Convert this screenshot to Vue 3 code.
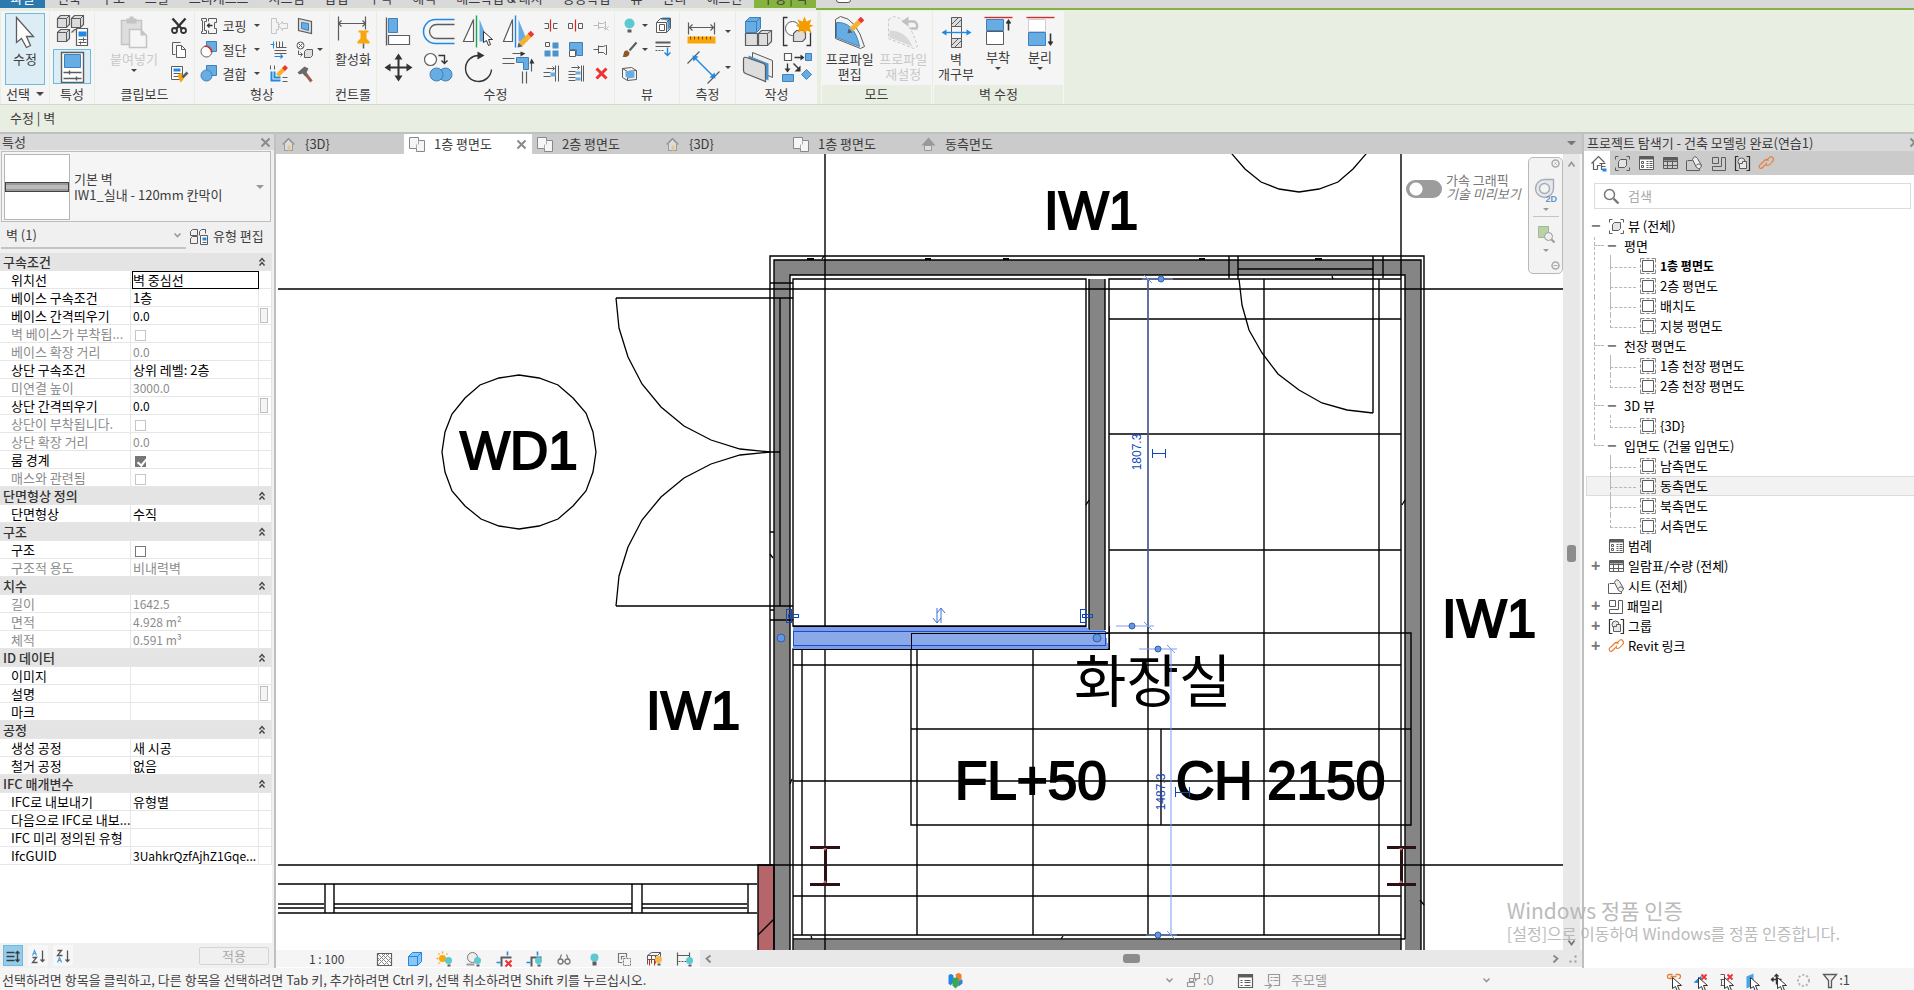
<template>
  <div class="app">
    <nav class="menu">
      <button class="menu-file">파일</button>
      <button v-for="m in menus" :key="m">{{ m }}</button>
      <button class="menu-active">수정 | 벽</button>
      <span class="menu-toggle"></span>
    </nav>

    <div class="ribbon">
      <section class="panel w-select">
        <div class="body">
          <button class="big on tall"><Icon name="cursor" /><span>수정</span></button>
        </div>
        <h2>선택 <i class="tri wide"></i></h2>
      </section>

      <section class="panel w-props">
        <div class="body stack">
          <button class="sq" aria-label="유형 특성"><Icon name="typeProps" /></button>
          <button class="sq on" aria-label="특성"><Icon name="props" /></button>
        </div>
        <h2>특성</h2>
      </section>

      <section class="panel w-clip">
        <div class="body">
          <button class="big off paste" disabled><Icon name="paste" /><span>붙여넣기</span><i class="tri"></i></button>
          <div class="col">
            <button v-for="n in ['cut', 'copy', 'match']" :key="n" :aria-label="n"><Icon :name="n" /></button>
          </div>
        </div>
        <h2>클립보드</h2>
      </section>

      <section class="panel w-geom">
        <div class="body">
          <div class="col geom">
            <button v-for="g in geometry" :key="g.label"><Icon :name="g.icon" /><span>{{ g.label }}</span><i class="tri"></i></button>
          </div>
          <div class="col">
            <button v-for="n in ['copeOff', 'beamJoin', 'wallJoin']" :key="n" :aria-label="n"><Icon :name="n" /></button>
          </div>
          <div class="col">
            <button v-for="n in ['face', 'paint', 'hammer']" :key="n" :aria-label="n"><Icon :name="n" /></button>
          </div>
          <i class="tri mid"></i>
        </div>
        <h2>형상</h2>
      </section>

      <section class="panel w-ctrl">
        <div class="body">
          <button class="big"><Icon name="activate" /><span>활성화</span></button>
        </div>
        <h2>컨트롤</h2>
      </section>

      <section class="panel w-modify">
        <div class="body">
          <div class="grid-big">
            <button v-for="n in modifyBig" :key="n" :aria-label="n"><Icon :name="n" /></button>
          </div>
          <div class="grid-small">
            <button v-for="n in modifySmall" :key="n" :aria-label="n"><Icon :name="n" /></button>
          </div>
        </div>
        <h2>수정</h2>
      </section>

      <section class="panel w-view">
        <div class="body">
          <div class="col view-col">
            <button aria-label="숨기기"><Icon name="bulb" /><i class="tri"></i></button>
            <button aria-label="재지정"><Icon name="brush" /><i class="tri"></i></button>
            <button aria-label="선택 상자"><Icon name="selBox" /></button>
          </div>
          <div class="col">
            <button aria-label="변위"><Icon name="cubeBox" /></button>
            <button aria-label="선 작업"><Icon name="linework" /></button>
          </div>
        </div>
        <h2>뷰</h2>
      </section>

      <section class="panel w-measure">
        <div class="body pair">
          <button aria-label="측정"><Icon name="ruler" /><i class="tri"></i></button>
          <button aria-label="치수"><Icon name="dimension" /><i class="tri"></i></button>
        </div>
        <h2>측정</h2>
      </section>

      <section class="panel w-create">
        <div class="body create">
          <button v-for="n in ['assembly', 'group', 'parts', 'similar']" :key="n" :aria-label="n"><Icon :name="n" /></button>
        </div>
        <h2>작성</h2>
      </section>

      <section class="panel green w-mode">
        <div class="body mode-body">
          <button class="big"><Icon name="profile" /><span>프로파일<br>편집</span></button>
          <button class="big off" disabled><Icon name="profileReset" /><span>프로파일<br>재설정</span></button>
        </div>
        <h2>모드</h2>
      </section>

      <section class="panel green w-wall">
        <div class="body wall-body">
          <button class="big"><Icon name="opening" /><span>벽<br>개구부</span></button>
          <button class="big"><Icon name="attach" /><span>부착</span><i class="tri"></i></button>
          <button class="big"><Icon name="detach" /><span>분리</span><i class="tri"></i></button>
        </div>
        <h2>벽 수정</h2>
      </section>
    </div>

    <div class="options">수정 | 벽</div>

    <main class="main">
      <aside class="props">
        <header>특성<button aria-label="닫기"><Icon name="close" /></button></header>
        <button class="type">
          <span class="thumb"><i></i></span>
          <span>기본 벽<br>IW1_실내 - 120mm 칸막이</span>
          <i class="tri wide"></i>
        </button>
        <div class="filter">
          <label class="filter-select">
            <select aria-label="카테고리"><option>벽 (1)</option></select>
            <Icon name="chevron" />
          </label>
          <button><Icon name="editType" />유형 편집</button>
        </div>
        <div class="sheet">
          <table>
            <colgroup><col class="c1"><col><col class="c3"></colgroup>
            <tbody v-for="g in groups" :key="g.name">
              <tr class="group"><th colspan="3"><div>{{ g.name }}<Icon name="fold" /></div></th></tr>
              <tr v-for="r in g.rows" :key="r[0]" :class="{ dim: r[2]?.includes('d') }">
                <th scope="row">{{ r[0] }}</th>
                <td>
                  <input v-if="typeof r[1] === 'boolean'" type="checkbox" :checked="r[1]" :aria-label="r[0]" :disabled="r[2]?.includes('d')">
                  <input v-else type="text" :value="r[1]" :aria-label="r[0]" :disabled="r[2]?.includes('d')" :class="{ focus: r[2]?.includes('f'), latin: !/[가-힣]/.test(r[1]) }">
                </td>
                <td><button v-if="r[2]?.includes('b')" class="assoc" aria-label="매개변수 연관"></button></td>
              </tr>
            </tbody>
          </table>
        </div>
        <footer>
          <button class="sort on" aria-label="범주별"><Icon name="sortCat" /></button>
          <button class="sort" aria-label="오름차순"><Icon name="sortAz" /></button>
          <button class="sort" aria-label="내림차순"><Icon name="sortZa" /></button>
          <button class="apply" disabled>적용</button>
        </footer>
      </aside>

      <section class="doc">
        <div class="tabs">
          <button v-for="(t, i) in tabs" :key="i" :class="{ active: t.active }">
            <Icon :name="t.icon" /><span>{{ t.name }}</span><Icon v-if="t.active" name="close" class="x" />
          </button>
          <i class="tab-list"></i>
        </div>

        <div class="work">
          <div class="canvas">
            <svg class="plan" viewBox="276 154 1287 796" preserveAspectRatio="xMinYMin slice">
              <g fill="#858585">
                <path d="M774 260H1421V950H1405V275H790V950H774Z" />
                <path d="M1089 279H1105V631H1089Z" />
                <path d="M793 940H1401V950H793Z" />
              </g>
              <path d="M758 865H774V950H758Z" fill="#b5666b" />
              <g class="ln">
                <path d="M825 154V950M1401 154V950M278 289H1563M278 865H1563" />
                <path d="M770 865V256H1424V950M774 950V260H1421V950M790 950V275H1405V939M793 626V279H1086V626Z" />
                <path d="M1089 630V279M1105 630V279M1109 649V279H1401M793 950V649H1109M793 935H1401M793 939H1405" />
                <path d="M802 649V935M917 649V935M1033 649V935M1148 279V935M1264 279V935M1379 279V935" />
                <path d="M1109 319H1401M1109 434H1401M1109 550H1401M793 665H1401M793 781H1401M793 896H1401" />
                <path d="M911 633H1411V825H911ZM911 729H1411M1161 729V825" />
                <path d="M616 298H793M616 606H793M780 298V606M770 452H780M770 283H793M770 620H793M770 610H774M770 532H774" />
                <path d="M1229 256V278M1238 256V279M1373 256V413M1383 256V278M1238 269H1373" />
                <path d="M278 884H757M278 904H324M334 904H632M642 904H747M278 908H324M334 908H632M642 908H747M278 913H757" />
                <path d="M325 884V913M334 884V913M632 884V913M642 884V913M748 884V913M758 950V865H774V950" />
                <path d="M807 259H814M925 259H931M1003 259H1009M1199 259H1205M1315 259H1322" stroke-width="2" />
              </g>
              <g class="curve">
                <path :d="arc(519, 452, 77, 0, 360, 24)" />
                <path :d="arc(1299, 115, 77, 0, 360, 24)" />
                <path :d="arc(770, 298, 154, 180, 90, 8)" />
                <path :d="arc(770, 606, 154, 180, 270, 8)" />
                <path :d="arc(1373, 279, 134, 180, 90, 8)" />
                <path d="M758 935L774 919M822 259L824 256M1086 505L1089 500M770 554L773 558M1402 505L1405 500M1332 276L1333 279M811 936L812 939M1061 939L1063 936M790 784L792 779M1420 900L1424 905" />
              </g>
              <g class="beam">
                <path d="M810 847H840M810 884H840M825 847V884M1387 847H1416M1387 884H1416M1401 847V884" />
              </g>
              <path d="M823 848h4l-2 3zM823 883h4l-2 -3zM1399 848h4l-2 3zM1399 883h4l-2 -3z" fill="#c0686c" />
              <g class="tag">
                <text x="1044" y="229">IW1</text>
                <text x="1442" y="637">IW1</text>
                <text x="646" y="729">IW1</text>
                <text x="460" y="469">WD1</text>
                <text x="955" y="799">FL+50</text>
                <text x="1176" y="799">CH 2150</text>
                <text x="1074" y="702" class="room">화장실</text>
              </g>
              <g class="sel">
                <path d="M793 627H1086L1089 630H1105L1108 645V649H793Z" fill="#7b9bec" />
                <path d="M793 631H1105V645H793Z" fill="#8ba8e8" stroke="#1a4fc4" />
                <path d="M911 649V633H1109M793 626H1086M793 649H1109V626" stroke="#000" fill="none" />
              </g>
              <g class="dim-line">
                <path d="M1148 279V626M1142 279H1173M1116 626H1154M1139 649H1177M1171 649V935M1146 935H1177" />
                <path d="M1144 275L1152 283M1144 622L1152 630M1167 645L1175 653M1167 931L1175 939" />
              </g>
              <g class="grip">
                <circle cx="1161" cy="279" r="3" /><circle cx="1132" cy="626" r="3" />
                <circle cx="1158" cy="649" r="3" /><circle cx="1158" cy="935" r="3" />
                <circle cx="781" cy="638" r="4" /><circle cx="1097" cy="638" r="4" />
              </g>
              <g class="flip">
                <path d="M786 609H791V622H786ZM788 614H798V617H788ZM1080 609H1085V622H1080ZM1082 614H1092V617H1082Z" />
                <path d="M1152 449V458M1165 449V458M1153 453H1165M1175 787V797M1189 787V797M1175 792H1189" />
                <path d="M937 608V622M941 609V623M933 618L937 623L941 618M937 613L941 608L945 613" class="flip-arrows" />
              </g>
              <g class="dim-text">
                <text transform="translate(1141 452) rotate(-90)">1807.3</text>
                <text transform="translate(1165 792) rotate(-90)">1487.3</text>
              </g>
            </svg>

            <label class="accel">
              <input type="checkbox" role="switch">
              <span>가속 그래픽<br><em>기술 미리보기</em></span>
            </label>
            <div class="navbar">
              <Icon name="navClose" class="end" />
              <button aria-label="탐색 휠"><Icon name="wheel" /></button>
              <i class="tri"></i>
              <hr>
              <button aria-label="영역 줌"><Icon name="zoomArea" /></button>
              <i class="tri"></i>
              <Icon name="navMin" class="end last" />
            </div>
          </div>
          <div class="vscroll">
            <button aria-label="위로"><Icon name="up" /></button>
            <i class="thumb-v"></i>
            <button aria-label="아래로"><Icon name="down" /></button>
          </div>
        </div>

        <div class="viewbar">
          <div class="view-tools">
            <span class="scale">1 : 100</span>
            <button v-for="n in viewTools" :key="n" :aria-label="n"><Icon :name="n" /></button>
          </div>
          <div class="hscroll">
            <button aria-label="왼쪽으로"><Icon name="left" /></button>
            <i class="thumb-h"></i>
            <button aria-label="오른쪽으로"><Icon name="right" /></button>
          </div>
          <Icon name="corner" class="corner" />
        </div>
      </section>

      <aside class="browser">
        <header>프로젝트 탐색기 - 건축 모델링 완료(연습1)<button aria-label="닫기"><Icon name="close" /></button></header>
        <div class="browser-tabs">
          <button v-for="(n, i) in browserTabs" :key="n" :class="{ active: i === 0 }" :aria-label="n"><Icon :name="n" /></button>
        </div>
        <label class="search"><Icon name="search" /><input type="text" placeholder="검색" aria-label="검색"></label>
        <ul class="tree">
          <li v-for="(n, i) in tree" :key="i" :class="['lv' + n.level, { bold: n.bold, hot: n.hot, last: n.last, trunk: n.level > 0 && i < 12, trunkEnd: i === 11 }]">
            <span class="exp">{{ n.exp }}</span>
            <Icon v-if="n.icon" :name="n.icon" />
            <a href="#">{{ n.name }}</a>
          </li>
        </ul>
      </aside>
    </main>

    <footer class="status">
      <span class="hint">선택하려면 항목을 클릭하고, 다른 항목을 선택하려면 Tab 키, 추가하려면 Ctrl 키, 선택 취소하려면 Shift 키를 누르십시오.</span>
      <div class="workset">
        <Icon name="worksets" />
        <Icon name="chevron" class="push" />
      </div>
      <div class="requests"><Icon name="editReq" />:0</div>
      <div class="options-set">
        <Icon name="optList" /><Icon name="optAdd" /><span>주모델</span>
        <Icon name="chevron" class="push" />
      </div>
      <div class="filters">
        <button v-for="n in statusTools" :key="n" :aria-label="n"><Icon :name="n" /></button>
        <span>:1</span>
      </div>
    </footer>

    <div class="watermark"><b>Windows 정품 인증</b>[설정]으로 이동하여 Windows를 정품 인증합니다.</div>
  </div>
</template>

<script setup>
import { h } from 'vue'

const K = '#5c5c5c'
const B = '#67ade3'
const D = '#1e88e5'
const s = (d, c = K, w = 1, f = 'none') => `<path d="${d}" stroke="${c}" stroke-width="${w}" fill="${f}"/>`
const f = (d, c = K) => `<path d="${d}" fill="${c}"/>`
const bulbBadge = (x, y, c = '#5bc8d2') => `<circle cx="${x}" cy="${y}" r="3.5" fill="${c}"/>` + f(`M${x - 1} ${y + 4}h3v2h-3z`)
const pointer = (x, y) => s(`M${x} ${y}v11l3-2 2 5 2-1-2-5h4z`, '#333', 1, '#fff')

const icons = {
  cursor: [20, 32, s('M1 1V26L6 22L11 31L15 29L11 20H18Z', K, 1.3, '#fff')],
  typeProps: [32, 32, s('M1 4l3-3h9v9l-3 3H1zM15 4l3-3h9v9l-3 3h-9zM1 18l3-3h9v9l-3 3H1z', K, 1.2, '#dcdcdc') + s('M1 4h9v9M10 4l3-3M15 4h9v9M24 4l3-3M1 18h9v9M10 18l3-3', K, 1) + s('M15 18l3-3h9v4', K, 1.2, '#dcdcdc') + s('M20 14h11v17H20z', K, 1.2, '#fff') + f('M22 17h8v5h-8z', D) + s('M22 25h8M22 28h8M27 23v4M24 27v3')],
  props: [24, 32, s('M1 1h22v30H1z', K, 1.4, '#fff') + s('M4 3h16v13H4z', '#3f81bd', 1, B) + s('M3 21h18M3 27h18M9 19v4M16 25v4', K, 1.4)],
  paste: [28, 32, s('M1 4h20v24H1z', '#c4c4c4', 1.5, '#dedede') + f('M6 2h3V0h4v2h3v5H6z', '#c4c4c4') + s('M9 13h11l6 6v12H9z', '#c4c4c4', 1.5, '#f6f6f6') + f('M20 13l6 6h-6z', '#c4c4c4')],
  cut: [17, 17, s('M2 1l9 10M15 1L6 11', '#333', 2.4) + `<circle cx="4" cy="13" r="2.5" stroke="#333" stroke-width="1.8" fill="none"/><circle cx="13" cy="13" r="2.5" stroke="#333" stroke-width="1.8" fill="none"/>`],
  copy: [17, 17, s('M10 1H2v12h3') + s('M6 4h5l4 4v8H6z', K, 1, '#fff') + s('M11 4v4h4')],
  match: [17, 17, s('M1 1h11v13H1z', K, 1, '#fff') + f('M3 3h7v3H3z', D) + s('M3 8h7M3 11h5') + f('M7 10l4-3 2 7-3 3z', '#f9a60a') + s('M12 12l5-5', K, 2.5)],
  cope: [17, 17, s('M1 1h5v3H4v9h2v3H1M1 1v2h1v11H1v2M8 4V1h8v4h-2v6h2v5H8v-3') + s('M7 8h5M9 6L7 8l2 2', '#333', 1.4)],
  cutGeom: [17, 17, s('M6 0h10v10H6z', '#3f81bd', 1, B) + `<circle cx="6" cy="10" r="5.5" fill="#fff" stroke="${K}"/>` + s('M4 5a6 6 0 0 1 7 6', '#d22', 1.4)],
  join: [17, 17, s('M6 0h10v10H6z', '#3f81bd', 1, B) + `<circle cx="6" cy="10" r="5.5" fill="${B}" stroke="#3f81bd"/>`],
  copeOff: [17, 17, s('M1 1h5v4h2v7H6v4H1z', '#c4c4c4', 1, '#f3f3f3') + s('M8 8l4-4v2h5v5h-5v2z', '#c4c4c4', 1, '#f3f3f3')],
  beamJoin: [17, 17, s('M0 3h4M3 0v7', D) + s('M6 0v6M9 0v6M12 0v6M6 6h10M4 9h12M4 12h12', K) + s('M4 15h8M10 13l2 2-2 2', D, 1.2)],
  wallJoin: [17, 17, s('M1 6v9h9M4 6v6h6', D, 2) + s('M0 0v4M4 0v4M12 12h5M12 16h5') + s('M7 10l7-7', '#f7b12b', 4) + s('M13 4l3-3', '#e33', 4)],
  face: [17, 17, s('M2 1l13 3v12L2 13z', K, 1.2, '#ddd') + s('M5 5l7 1v7l-7-2z', '#3f81bd', 1, B)],
  paint: [17, 17, `<circle cx="4" cy="4" r="3.500" fill="#fff" stroke="${K}"/>` + s('M2 2l4 4M6 2L2 6M2 9v4h4M4 11l2 2-2 2') + s('M8 10l2-2h6v6l-2 2H8z', K, 1, '#ddd')],
  hammer: [17, 17, s('M8 7l7 9', '#a0604a', 3) + f('M1 7l7-6 4 2-2 4 1 2-2 2-3-3-3 1z', '#6a6a6a')],
  activate: [32, 32, s('M1 0v24M28 0v13M1 7h27M4 4L1 7l3 3M25 4l3 3-3 3', K, 1.2) + f('M21 14h10v2h-2v6l3 3v2H20v-2l3-3v-6h-2z', '#f9a60a') + s('M26 27v5', K, 1.5)],
  align: [28, 28, s('M2 0v28', K, 1.4) + s('M4 1h9v14H4z', '#3f81bd', 1, B) + s('M4 18h21v9H4z', K, 1.2, '#fff')],
  offset: [32, 26, s('M32 1H13a12 12 0 0 0 0 24H32', D, 1.5) + s('M32 6H14a7 7 0 0 0 0 14H32', K, 1.3)],
  mirrorPick: [32, 32, s('M11 4v22H1z', K, 1.2, '#fff') + s('M14 0v32', '#18a84c', 1.4) + f('M17 4v22h9z', B) + pointer(21, 16)],
  mirrorDraw: [32, 32, s('M10 4v22H1z', K, 1.2, '#fff') + s('M13 0v32', D, 1.4) + f('M16 4v22h9z', B) + s('M18 29L28 19', '#f7b12b', 5) + s('M27 20l3-3', '#e33', 5) + f('M15 32l1-5 4 4z')],
  move: [28, 28, s('M14 4v20M4 14h20', '#333', 2) + f('M14 0l4 6h-8zM14 28l4-6h-8zM0 14l6-4v8zM28 14l-6-4v8z', '#333')],
  copyMod: [30, 30, `<circle cx="7" cy="7" r="6" fill="#fff" stroke="${K}" stroke-width="1.2"/><circle cx="22" cy="22" r="6.5" fill="${B}" stroke="#3f81bd"/><circle cx="13" cy="22" r="6.5" fill="${B}" stroke="#3f81bd"/>` + s('M15 3h6v8M18 8l3 3 3-3', '#333', 1.4)],
  rotate: [30, 32, s('M16 4a13 13 0 1 0 12 14', '#333', 1.4) + f('M14 0l7 4-7 4z', '#333')],
  trim: [32, 32, s('M0 7h12M0 12h12M20 20v12M24 20v12M10 2h10M29 20V11', K, 1.2) + s('M14 6h12v12h-5v-7h-7z', '#3f81bd', 1, B) + f('M18 0l5 2-5 3zM27 12l2-5 3 5z', '#333')],
  split: [16, 16, s('M1 6h4v5H1M14 6h-4v5h4') + s('M7 2v12', '#d22', 1.2)],
  splitGap: [16, 16, s('M0 6h4v5H0zM14 6h-4v5h4z') + s('M7 2v12', '#d22', 1.2)],
  unpin: [16, 16, s('M0 8h5M5 4v8M5 6h5l2-2v8l-2-2H5M11 9l4 4M15 9l-4 4', '#bcbcbc')],
  array: [16, 16, s('M2 1h4v4H2z') + f('M9 1h6v6H9zM1 9h6v6H1zM9 9h6v6H9z', '#4b93cb')],
  scaleMod: [16, 16, s('M1 1h13v13H8V8H1z', '#3f81bd', 1, B) + s('M1 9h6v6H1z', K, 1, '#fff')],
  pin: [16, 16, s('M0 8h5M5 4v8M5 5h5l2-1h1v9h-1l-2-2H5')],
  trimOne: [16, 16, s('M12 0v16M15 0v16M0 7h7M0 11h7M3 3h8M9 1l2 2-2 2') + f('M7 7h5v4H7z', B)],
  trimMany: [16, 16, s('M13 0v16M15 0v16M0 6h7M0 9h7M0 12h7M0 15h7M3 2h8M9 0l2 2-2 2') + f('M7 6h5v3H7zM7 12h5v3H7z', B)],
  del: [16, 16, s('M3 3l10 10M13 3L3 13', '#f33030', 3)],
  bulb: [16, 16, `<circle cx="8" cy="6" r="5" fill="#5bc8d2"/>` + f('M6 12h4v3H6z')],
  brush: [16, 16, s('M8 9l7-8', K, 2) + f('M1 15c2-1 0-7 5-6l2 2c0 5-5 5-7 4z', '#8a5a2b')],
  selBox: [16, 16, s('M1 3l9-1 5 3v9l-9 1-5-3zM1 3l5 3v9M6 6l9-1') + f('M4 6l6-1 3 2v5l-6 1-3-2z', B)],
  cubeBox: [16, 16, f('M5 2l2-2h8v10l-3 3V3z', '#4b93cb') + s('M1 5l4-4h10v10l-4 4M11 5l4-4', K) + s('M1 5h10v10H1z', K, 1, '#fff') + s('M4 7h5v6H4z')],
  linework: [16, 16, s('M0 1h15', K, 2) + s('M0 5h15', K) + '<path d="M0 9h9" stroke="#5c5c5c" stroke-dasharray="2 1"/>' + s('M12 6v8M9 11l3 3 3-3', D, 1.4)],
  ruler: [28, 26, s('M1 4v12M27 4v12M2 9h24M5 6L2 9l3 3M23 6l3 3-3 3', K, 1.2) + f('M0 18h28v7H0z', '#f9a60a') + s('M3 18v3M7 18v3M11 18v3M15 18v3M19 18v3M23 18v3', '#7a5200')],
  dimension: [32, 32, s('M0 12L12 0M20 32L32 20', K, 1.2) + s('M7 6l20 20', D, 1.4) + f('M5 4l6 1-5 5zM28 27l-1-6-5 5z', D)],
  assembly: [28, 30, s('M1 17h12v12H1zM14 17l3-3h10v11l-4 4H14z', K, 1.2, '#ddd') + s('M14 17h9v12M23 17l4-3') + s('M1 5l4-4h11v11l-4 4H1z', '#3f81bd', 1, B) + s('M1 5h11v11M12 5l4-4', '#3f81bd')],
  group: [32, 30, s('M6 1H2v28h4M25 29h4V16', '#333', 1.3) + `<circle cx="11" cy="12" r="7" stroke="${K}" fill="#fff"/>` + s('M12 17l3-3h9v8l-3 3h-9z', K, 1.2, '#ddd') + f('M23 0l2 5 5-2-2 5 4 1-4 2 2 5-5-2-2 4-2-4-5 2 2-5-4-2 4-1-2-5 5 2z', '#f59c00')],
  parts: [32, 32, s('M10 1l20 8v17l-20-9z', K, 1, '#eee') + f('M6 4l20 8v17L6 20z', '#4b93cb') + s('M1 8q0-3 3-2l17 6q2 1 2 3v15L3 22q-2-1-2-3z', K, 1.2, '#ddd')],
  similar: [32, 30, s('M3 1h7v7H3z', K, 1.2, '#fff') + s('M24 1h6v7h-6zM1 22h11v7H1zM25 17l5 5-5 5-5-5z', '#3f81bd', 1, B) + s('M13 5h7M6 11v6M12 11l6 6', '#333', 1.4) + f('M19 2l4 3-4 3zM3 16l3 4 3-4zM19 13v6h-6z', '#333')],
  profile: [32, 32, s('M1 3L6 0Q22 2 30 30L26 32L1 22Z', K, 1, '#f3f3f3') + s('M2 6Q20 5 25 30L2 21Z', '#3f81bd', 1, B) + s('M17 13L25 5', '#f7b12b', 5) + s('M25 5l3-3', '#e33', 5) + f('M13 17l1-5 4 4z')],
  profileReset: [32, 32, '<path d="M1 3L6 0Q22 2 30 30L26 32L1 22Z" fill="#f3f3f3" stroke="#c8c8c8" stroke-dasharray="3 2"/>' + f('M2 14Q18 14 25 30L2 21Z', '#d8d8d8') + s('M20 5h7q4 3 2 7h-6', '#c0c0c0', 2.4) + f('M14 5l7-5v10z', '#c0c0c0')],
  opening: [30, 32, s('M10 1h10v9H10zM10 22h10v9H10z', K, 1, '#ddd') + s('M10 8l7-7M13 10l7-7M10 29l7-7M13 31l7-7M10 10v12M20 10v12') + s('M3 16h24', D, 1.4) + f('M0 16l5-3v6zM30 16l-5-3v6z', D)],
  attach: [28, 30, s('M0 1h28', '#c8302c', 1.4) + s('M2 3h17v11H2z', '#3f81bd', 1, B) + s('M2 15h17v13H2z', K, 1, '#fff') + s('M24 14V5M22 7l2-3 2 3', '#333', 1.6)],
  detach: [28, 30, s('M0 1h28', '#c8302c', 1.4) + s('M2 3h17v12H2z', '#cfcfcf', 1, '#fff') + s('M2 16h17v13H2z', '#3f81bd', 1, B) + s('M24 17v11M22 25l2 3 2-3', '#333', 1.6)],
  close: [11, 11, s('M1 1l8 8M9 1L1 9', '#8a8a8a', 2)],
  chevron: [8, 6, s('M1 1l3 3 3-3', '#999', 1.6)],
  editType: [18, 17, s('M0 3l2-2h5v6H0zM9 7V3l2-2h4v4M0 10l2-2h5v7H0z') + s('M10 7h7v9h-7z', K, 1, '#fff') + f('M12 9h4v3h-4z', D) + s('M12 14h4')],
  fold: [7, 9, s('M1 4l2.5-3L6 4M1 8l2.5-3L6 8', '#444', 1.4)],
  sortCat: [14, 14, s('M0 3h8M0 7h8M0 11h8M11 2v10M9 4l2-2 2 2M9 10l2 2 2-2', '#3c3c3c', 1.4)],
  sortAz: [14, 14, s('M1 6l2-5 2 5M2 4h3', '#4a9fe0', 1.2) + s('M1 8h4l-4 5h5M11 1v11M9 10l2 2 2-2', '#555', 1.3)],
  sortZa: [14, 14, s('M1 13l2-5 2 5M2 11h3', '#4a9fe0', 1.2) + s('M1 1h4L1 6h5M11 1v11M9 10l2 2 2-2', '#555', 1.3)],
  house: [15, 14, s('M3 6v7h8V6L7 2z', '#999', 1, '#ddd') + s('M1 7l6-6 6 6', '#999', 1.4) + f('M6 8h3v5H6z', '#e2c98f')],
  sheetTab: [16, 15, s('M0 0h9v3h6v11h-8v-3H0z', '#888', 1, '#f5f5f5') + s('M9 3v4M7 11V7', '#aaa')],
  elev: [15, 14, f('M7 0l7 8H0z', '#999') + s('M3 8h7v5H3z', '#999', 1, '#ddd')],
  navClose: [9, 9, `<circle cx="4" cy="4" r="3.500" fill="none" stroke="#aaa" stroke-width="1.500"/>` + s('M3 3l2 2M5 3L3 5', '#aaa')],
  navMin: [9, 9, `<circle cx="4" cy="4" r="3.500" fill="none" stroke="#aaa" stroke-width="1.500"/>` + s('M2 4h4', '#aaa')],
  wheel: [24, 24, s('M10 1h9v9a9 9 0 1 1-9-9z', '#a5acb5', 1.4, '#e5e8ec') + `<circle cx="10" cy="10" r="5" fill="#f3f3f3" stroke="#a5acb5" stroke-width="1.4"/><text x="11" y="23" font-size="9" font-weight="700" font-family="Liberation Sans" fill="#6a93c4">2D</text>`],
  zoomArea: [18, 18, s('M1 1h10v11H1z', '#9dbd8c', 1, '#b9d3a9') + `<circle cx="11" cy="11" r="4" fill="#eee" stroke="#999"/>` + s('M14 14l3 3', '#999', 2)],
  up: [9, 6, s('M1 5l3-4 3 4', '#999', 1.8)],
  down: [9, 6, s('M1 1l3 4 3-4', '#777', 1.8)],
  left: [6, 9, s('M5 1L1 4l4 4', '#888', 1.8)],
  right: [6, 9, s('M1 1l4 3-4 4', '#888', 1.8)],
  corner: [8, 8, f('M5 0h2v2H5zM5 5h2v2H5zM0 5h2v2H0z', '#999')],
  detail: [16, 14, s('M1 1h14v12H1z', K, 1.2, '#fff') + s('M1 1l12 12M5 1l10 10M9 1l6 6M13 1L1 13M9 1L1 9M15 5l-8 8M1 5l8 8', '#888', 1)],
  visual: [15, 15, s('M1 5l4-4h9v9l-4 4H1z', D, 1, '#8cc6f3') + s('M1 5h9v9M10 5l4-4', D)],
  sun: [16, 16, `<circle cx="6" cy="7" r="3.500" fill="#f9a60a"/>` + s('M6 0v2M0 7h2M2 2l1 1M10 3l1-1M2 12l1-1', '#f9a60a', 1.4) + bulbBadge(12, 9)],
  shadow: [16, 16, `<circle cx="6" cy="6" r="5" fill="#eee" stroke="#777"/>` + s('M0 13h8', '#999', 2) + bulbBadge(11, 9)],
  crop: [16, 16, s('M5 15V6h10', K, 2) + s('M0 11h4M11 0v4', D, 1.6) + s('M9 9l6 6M15 9l-6 6', '#f33030', 2)],
  cropShow: [16, 16, s('M5 15V6h10', K, 2) + s('M0 11h4M11 0v4', D, 1.6) + bulbBadge(12, 9)],
  glasses: [14, 12, `<circle cx="3" cy="8" r="2.500" fill="none" stroke="#777" stroke-width="1.300"/><circle cx="10" cy="8" r="2.500" fill="none" stroke="#777" stroke-width="1.300"/>` + s('M2 6l2-5M11 6L9 1M5 8h2', '#777', 1.2)],
  bulbOnly: [10, 14, `<circle cx="5" cy="5" r="4" fill="#5bc8d2"/>` + f('M3 9h4v4H3z')],
  tempView: [14, 14, s('M9 5V1H1v9h4M4 7V4h3', '#777', 1.2) + '<path d="M6 6h7v7H6z" fill="none" stroke="#777" stroke-dasharray="2 1"/>'],
  analytic: [16, 15, s('M1 4l4-3h9l-3 3H1v9M5 4v8M9 4v8M1 8h9M14 1v5', K) + s('M3 8v6M8 8v6', '#d22') + bulbBadge(12, 8, '#f7b84a')],
  constraint: [17, 15, s('M1 1v13M13 1v6M1 4h12', K, 1.2) + '<path d="M2 10h8" stroke="#5c5c5c" stroke-dasharray="2 1"/>' + bulbBadge(13, 9)],
  bHome: [16, 16, s('M1 8l7-7 6 6M3 7v7h4M7 14v-4h3M9 8h6M11 8v6h4M11 11h4', K, 1.2) + f('M12 13h4v3h-4z', D)],
  bViews: [16, 16, s('M4 1H1v3M12 1h3v3M4 15H1v-3M12 15h3v-3') + s('M4 6l2-2h6v6l-2 2H4z', K, 1, '#e4e4e4')],
  bLegend: [16, 16, s('M1 1h14v13H1z', K, 1, '#fff') + f('M1 1h14v3H1z') + s('M3 6h2v2H3zM3 10h2v2H3zM8 6h2M11 6h3M8 8h2M11 8h3M8 10h2M11 10h3M8 12h2M11 12h3')],
  bTable: [16, 14, s('M1 1h14v11H1zM1 5h14M1 9h14M5 4v8M10 4v8') + f('M1 1h14v3H1z')],
  bSheet: [16, 16, s('M1 5h5M0 5v10h13v-2') + s('M6 4q2-5 5-1l4 7q-1 5-5 2z', K, 1, '#eee') + s('M10 10q1-3 5 0')],
  bFamily: [15, 15, s('M1 1h6v6H1z') + s('M10 1h4v13H1v-4h9z')],
  bGroup: [16, 16, s('M4 1H1v14h3M12 1h3v14h-3', '#333', 1.2) + `<circle cx="7" cy="6" r="3.500" fill="#e9e9e9" stroke="${K}"/>` + s('M5 8h3v-2h4v7H5z', K, 1, '#e9e9e9')],
  bLink: [16, 14, s('M7 8l-3 3q-2 2-3 0t1-3l4-4q2-2 4 0M8 6q-1 3 1 3t5-4q2-2 0-4t-4 1l-2 2', '#e8803a', 1.2)],
  view: [16, 16, s('M2 2h11v11H2z', K, 1, '#fff') + s('M0 4V0h4M6 0h3M11 0h4v4M15 6v3M15 11v4h-4M9 15H6M4 15H0v-4M0 9V6', '#8a8a8a')],
  search: [16, 16, `<circle cx="6" cy="6" r="5" fill="none" stroke="#777" stroke-width="1.500"/>` + s('M10 10l5 5', '#777', 2.4)],
  worksets: [16, 16, f('M1 3q2-3 5 0v7l-3 3-2-2z', D) + f('M8 2q3-3 6 0v9l-4 2z', '#e8803a') + f('M11 9l4-2v4l-4 3z', D) + f('M5 6q3-2 6 0v7l-3 3-3-3z', '#3aa757')],
  editReq: [14, 15, s('M8 1h5v5h-2l-2 2V6H8zM3 6h4v3H3zM1 14v-4h7v4z', '#999', 1.2)],
  optList: [16, 15, s('M1 1h14v13H1z', K, 1.2, '#fff') + f('M1 1h14v3H1z') + s('M3 7h2M7 7h6M3 9h2M7 9h6M3 12h2M7 12h6')],
  optAdd: [16, 15, s('M4 9V1h11v11H9', '#999', 1.2) + s('M6 4h2M9 4h5M6 7h2M9 7h5M0 12h6M4 10l3 2-3 3', '#999', 1.2)],
  selLink: [15, 15, s('M6 1H3q-2 0-2 2t2 2h4M9 1h3q2 0 2 2t-2 2M4 3h6', '#e8803a', 1.3) + pointer(6, 4)],
  selUnder: [15, 15, f('M1 9l8-7v8z', D) + s('M9 1l5 5M14 1L9 6', '#f33030', 1.8) + pointer(6, 4)],
  selPin: [15, 15, s('M2 1h4v5H2M2 12h4M3 6v6', K) + s('M9 1l5 5M14 1L9 6', '#f33030', 1.8) + pointer(6, 4)],
  selFace: [15, 15, f('M2 3l7-3v12l-7 3z', '#4ba3e8') + pointer(6, 4)],
  selDrag: [15, 15, s('M6 1v10M1 6h10M4 3l2-2 2 2M3 4L1 6l2 2', '#333', 1.4) + pointer(7, 4)],
  busy: [15, 15, '<circle cx="7" cy="7" r="5.500" fill="none" stroke="#b5b5b5" stroke-width="2" stroke-dasharray="2 2"/>'],
  funnel: [15, 15, s('M1 1h13L9 7v7H6V7z', K, 1.3, '#eee')],
}

// the half pixel in the viewBox keeps one pixel strokes sharp
const Icon = ({ name }) => {
  const [w, t, body] = icons[name]
  return h('svg', { class: 'icon', width: w, height: t, viewBox: `-0.5 -0.5 ${w} ${t}`, innerHTML: body, 'aria-hidden': true })
}
Icon.props = ['name']

// circles and door swings are drawn as short chords, like the CAD view does
const arc = (cx, cy, r, from, to, n) => {
  const pts = []
  for (let i = 0; i <= n; i++) {
    const a = (from + ((to - from) * i) / n) * Math.PI / 180
    pts.push(`${Math.round(cx + r * Math.cos(a))} ${Math.round(cy + r * Math.sin(a))}`)
  }
  return 'M' + pts.join('L')
}

const menus = ['건축', '구조', '스틸', '프리캐스트', '시스템', '삽입', '주석', '해석', '매스작업 & 대지', '공동작업', '뷰', '관리', '애드인']

const geometry = [
  { icon: 'cope', label: '코핑' },
  { icon: 'cutGeom', label: '절단' },
  { icon: 'join', label: '결합' },
]
const modifyBig = ['align', 'offset', 'mirrorPick', 'mirrorDraw', 'move', 'copyMod', 'rotate', 'trim']
const modifySmall = ['split', 'splitGap', 'unpin', 'array', 'scaleMod', 'pin', 'trimOne', 'trimMany', 'del']
const viewTools = ['detail', 'visual', 'sun', 'shadow', 'crop', 'cropShow', 'glasses', 'bulbOnly', 'tempView', 'analytic', 'constraint']
const browserTabs = ['bHome', 'bViews', 'bLegend', 'bTable', 'bSheet', 'bFamily', 'bGroup', 'bLink']
const statusTools = ['selLink', 'selUnder', 'selPin', 'selFace', 'selDrag', 'busy', 'funnel']

// flags: d = disabled, f = focused, b = has associate button
const groups = [
  {
    name: '구속조건',
    rows: [
      ['위치선', '벽 중심선', 'f'],
      ['베이스 구속조건', '1층'],
      ['베이스 간격띄우기', '0.0', 'b'],
      ['벽 베이스가 부착됩...', false, 'd'],
      ['베이스 확장 거리', '0.0', 'd'],
      ['상단 구속조건', '상위 레벨: 2층'],
      ['미연결 높이', '3000.0', 'd'],
      ['상단 간격띄우기', '0.0', 'b'],
      ['상단이 부착됩니다.', false, 'd'],
      ['상단 확장 거리', '0.0', 'd'],
      ['룸 경계', true],
      ['매스와 관련됨', false, 'd'],
    ],
  },
  { name: '단면형상 정의', rows: [['단면형상', '수직']] },
  { name: '구조', rows: [['구조', false], ['구조적 용도', '비내력벽', 'd']] },
  { name: '치수', rows: [['길이', '1642.5', 'd'], ['면적', '4.928 m²', 'd'], ['체적', '0.591 m³', 'd']] },
  { name: 'ID 데이터', rows: [['이미지', ''], ['설명', '', 'b'], ['마크', '']] },
  { name: '공정', rows: [['생성 공정', '새 시공'], ['철거 공정', '없음']] },
  {
    name: 'IFC 매개변수',
    rows: [
      ['IFC로 내보내기', '유형별'],
      ['다음으로 IFC로 내보...', ''],
      ['IFC 미리 정의된 유형', ''],
      ['IfcGUID', '3UahkrQzfAjhZ1Gqe...'],
    ],
  },
]

const tabs = [
  { icon: 'house', name: '{3D}' },
  { icon: 'sheetTab', name: '1층 평면도', active: true },
  { icon: 'sheetTab', name: '2층 평면도' },
  { icon: 'house', name: '{3D}' },
  { icon: 'sheetTab', name: '1층 평면도' },
  { icon: 'elev', name: '동측면도' },
]

const tree = [
  { level: 0, exp: '−', icon: 'bViews', name: '뷰 (전체)' },
  { level: 1, exp: '−', name: '평면' },
  { level: 2, icon: 'view', name: '1층 평면도', bold: true },
  { level: 2, icon: 'view', name: '2층 평면도' },
  { level: 2, icon: 'view', name: '배치도' },
  { level: 2, icon: 'view', name: '지붕 평면도', last: true },
  { level: 1, exp: '−', name: '천장 평면도' },
  { level: 2, icon: 'view', name: '1층 천장 평면도' },
  { level: 2, icon: 'view', name: '2층 천장 평면도', last: true },
  { level: 1, exp: '−', name: '3D 뷰' },
  { level: 2, icon: 'view', name: '{3D}', last: true },
  { level: 1, exp: '−', name: '입면도 (건물 입면도)' },
  { level: 2, icon: 'view', name: '남측면도' },
  { level: 2, icon: 'view', name: '동측면도', hot: true },
  { level: 2, icon: 'view', name: '북측면도' },
  { level: 2, icon: 'view', name: '서측면도', last: true },
  { level: 0, icon: 'bLegend', name: '범례' },
  { level: 0, exp: '+', icon: 'bTable', name: '일람표/수량 (전체)' },
  { level: 0, icon: 'bSheet', name: '시트 (전체)' },
  { level: 0, exp: '+', icon: 'bFamily', name: '패밀리' },
  { level: 0, exp: '+', icon: 'bGroup', name: '그룹' },
  { level: 0, exp: '+', icon: 'bLink', name: 'Revit 링크' },
]
</script>

<style>
body {
  margin: 0;
  overflow: hidden;
}
</style>

<style scoped>
.app {
  --line: #c0c0c0;
  --green: #e9eee2;

  position: relative;
  display: flex;
  flex-direction: column;
  height: 100vh;
  overflow: hidden;
  font: 13px/16px "Noto Sans CJK KR", "Open Sans", sans-serif;
  color: #3c3c3c;
  background: var(--green);
}

.app * {
  box-sizing: border-box;
}

button,
input,
select {
  font: inherit;
  color: inherit;
  background: none;
  border: 0;
  padding: 0;
  margin: 0;
}

.icon {
  display: block;
  flex: none;
  overflow: visible;
}

.tri {
  flex: none;
  width: 0;
  border: 3px solid transparent;
  border-top: 3px solid #444;
  border-bottom: 0;
}

.tri.wide {
  border-width: 4px;
  border-bottom: 0;
}

/* menu strip */
.menu {
  display: flex;
  gap: 20px;
  height: 8px;
  background: #d9d9d9;
}

.menu button {
  height: 16px;
  margin-top: -10px;
  white-space: nowrap;
}

.menu .menu-file {
  width: 45px;
  height: 18px;
  margin-right: -8px;
  padding-bottom: 2px;
  color: #fff;
  background: #2a7ab0;
}

.menu .menu-active {
  height: 18px;
  padding: 0 8px 2px;
  margin-left: -8px;
  background: #86b340;
}

.menu-toggle {
  width: 15px;
  height: 10px;
  margin-top: -7px;
  border: 1px solid #555;
  border-radius: 3px;
  background: #fff;
}

/* ribbon */
.ribbon {
  display: flex;
  gap: 1px;
  height: 97px;
  padding: 3px 1px 0;
  border-bottom: 1px solid #d4d6d0;
  background: linear-gradient(#86b340, #86b340) 816px 0 / 100% 2px no-repeat var(--green);
}

.panel {
  display: flex;
  flex-direction: column;
  flex: none;
  height: 93px;
  background: #f5f5f5;
}

.panel h2 {
  display: flex;
  align-items: center;
  justify-content: center;
  gap: 6px;
  height: 19px;
  margin: 0;
  padding-bottom: 2px;
  font-size: 13px;
  font-weight: 400;
}

.green h2 {
  margin: 0 1px;
  background: var(--green);
}

.body {
  display: flex;
  flex: 1;
  padding: 2px 4px 0;
  line-height: 15px;
}

.w-select { width: 48px; }
.w-props { width: 44px; }
.w-clip { width: 99px; }
.w-geom { width: 134px; }
.w-ctrl { width: 46px; }
.w-modify { width: 237px; }
.w-view { width: 64px; }
.w-measure { width: 55px; }
.w-create { width: 81px; margin-right: 3px; }
.w-mode { width: 111px; }
.w-wall { width: 131px; }

.big {
  display: flex;
  flex-direction: column;
  align-items: center;
  flex: 1;
  gap: 3px;
  height: 72px;
  padding-top: 3px;
  white-space: nowrap;
}

.on {
  background: #dcedf5;
  outline: 1px solid #6fb9dc;
  outline-offset: -1px;
}

.off {
  color: #c8c8c8;
}

.stack {
  flex-direction: column;
  gap: 2px;
  padding: 1px 3px 0;
}

.sq {
  display: grid;
  place-items: center;
  height: 35px;
}

.col {
  display: flex;
  flex-direction: column;
  align-items: center;
  width: 26px;
}

.col button {
  display: flex;
  align-items: center;
  height: 24px;
}

.paste {
  flex: 0 0 66px;
  margin-left: 2px;
}

.col.geom {
  width: 70px;
}

.geom button {
  gap: 6px;
}

.geom .tri {
  margin-left: 2px;
}

.tri.mid {
  margin-top: 35px;
}

.w-ctrl .body,
.w-geom .body {
  padding-left: 0;
  padding-right: 0;
}

.grid-big {
  display: grid;
  grid-template-columns: repeat(4, 40px);
  grid-template-rows: 36px 36px;
}

.grid-small {
  display: grid;
  grid-template-columns: repeat(3, 25px);
  grid-template-rows: repeat(3, 24px);
}

.w-modify .body {
  padding: 2px 0 0 1px;
}

.grid-big button,
.grid-small button,
.create button {
  display: grid;
  place-items: center;
}

.w-view .body {
  padding-left: 6px;
}

.view-col {
  width: 32px;
  align-items: flex-start;
}

.view-col button {
  gap: 5px;
}

.pair {
  flex-direction: column;
  padding: 2px 4px 0 7px;
}

.pair button {
  display: flex;
  align-items: center;
  justify-content: space-between;
  height: 36px;
}

.create {
  display: grid;
  grid-template-columns: 40px 38px;
  grid-template-rows: 36px 36px;
  padding: 2px 1px 0 2px;
}

.mode-body {
  padding: 2px 2px 0;
}

.wall-body {
  padding: 2px 3px 0 2px;
}

.wall-body .big {
  flex: 0 0 42px;
}

.options {
  height: 27px;
  padding: 5px 10px;
}

/* main area */
.main {
  display: flex;
  flex: 1;
  min-height: 0;
  border-top: 2px solid var(--line);
  background: #fff;
}

.props {
  display: flex;
  flex-direction: column;
  width: 276px;
  border-right: 2px solid var(--line);
  background: #f0f0f0;
}

.props header,
.browser header {
  display: flex;
  align-items: center;
  justify-content: space-between;
  height: 16px;
  padding: 0 3px 0 2px;
  background: #d9d9d9;
  white-space: nowrap;
}

.type {
  display: flex;
  align-items: center;
  gap: 4px;
  width: 270px;
  height: 71px;
  margin: 1px;
  padding: 0 6px 0 2px;
  border: 1px solid #bdbdbd;
  background: #f5f5f5;
  text-align: left;
}

.type .tri {
  margin-left: auto;
  border-top-color: #999;
}

.thumb {
  display: grid;
  align-items: center;
  width: 66px;
  height: 66px;
  border: 1px solid #b5b5b5;
  background: #fff;
}

.thumb i {
  height: 10px;
  border: 1px solid #444;
  background: #bbb;
  box-shadow: inset 0 2px #999, inset 0 -2px #999;
}

.filter {
  display: flex;
  gap: 4px;
  height: 30px;
  padding: 0 0 4px 1px;
}

.filter-select {
  display: flex;
  align-items: center;
  width: 185px;
  padding-right: 5px;
  border-bottom: 2px solid #c4c4c4;
}

.filter-select select {
  flex: 1;
  padding-left: 5px;
  appearance: none;
}

.filter button {
  display: flex;
  align-items: center;
  gap: 5px;
}

.sheet {
  flex: 1;
  width: 272px;
  overflow: hidden;
  background: #fff;
}

table {
  width: 272px;
  border-collapse: separate;
  border-spacing: 0;
  table-layout: fixed;
  color: #000;
}

.c1 { width: 131px; }
.c3 { width: 13px; }

tr {
  height: 18px;
}

tbody th,
td {
  height: 18px;
  padding: 0 0 0 2px;
  border-bottom: 1px solid #e6e6e6;
  border-right: 1px solid #e6e6e6;
  font-weight: 400;
  line-height: 16px;
  text-align: left;
  white-space: nowrap;
}

tbody th {
  padding-left: 11px;
}

.group th {
  padding: 0 6px 0 3px;
  font-weight: 500;
  color: #333;
  background: #e4e4e4;
}

.group th div {
  display: flex;
  align-items: center;
  justify-content: space-between;
}

.dim {
  color: #8c8c8c;
}

td input[type="text"] {
  display: block;
  width: 100%;
  height: 16px;
}

td input.latin {
  font-size: 12px;
}

td input.focus {
  outline: 1px solid #000;
}

td input[type="checkbox"] {
  display: block;
  appearance: none;
  width: 11px;
  height: 11px;
  margin: 3px 0 0 2px;
  border: 1px solid #777;
}

td input[type="checkbox"]:disabled {
  border-color: #c6c6c6;
}

td input:checked {
  background: #777;
}

td input:checked::after {
  content: "";
  display: block;
  width: 4px;
  height: 7px;
  margin-left: 3px;
  border: solid #fff;
  border-width: 0 2px 2px 0;
  transform: rotate(40deg);
}

.assoc {
  display: block;
  width: 8px;
  height: 15px;
  margin-left: -1px;
  border: 1px solid #c0c0c0;
  background: #f5f5f5;
}

.props footer {
  display: flex;
  align-items: center;
  gap: 5px;
  height: 25px;
  padding: 0 5px 0 3px;
}

.sort {
  display: grid;
  place-items: center;
  width: 20px;
  height: 21px;
  background: #f7f7f7;
}

.sort.on {
  background: #93cdeb;
}

.apply {
  width: 70px;
  height: 18px;
  margin-left: auto;
  border: 1px solid #d4d4d4;
  border-radius: 2px;
  color: #a8a8a8;
  line-height: 15px;
}

/* document window */
.doc {
  display: flex;
  flex-direction: column;
  flex: 1;
  min-width: 0;
}

.tabs {
  display: flex;
  height: 20px;
  background: #cbcbcb;
}

.tabs button {
  display: flex;
  align-items: center;
  gap: 9px;
  width: 128px;
  padding: 0 5px;
}

.tabs .active {
  background: #fff;
}

.x {
  margin-left: auto;
}

.tab-list {
  align-self: center;
  width: 9px;
  height: 7px;
  margin: 0 6px 0 auto;
  border: 4px solid transparent;
  border-top: 4px solid #777;
  border-bottom: 0;
}

.work {
  display: flex;
  flex: 1;
  min-height: 0;
}

.canvas {
  position: relative;
  flex: 1;
  overflow: hidden;
}

.plan {
  display: block;
  width: 100%;
  height: 100%;
}

.ln {
  fill: none;
  stroke: #000;
  stroke-width: 1.4;
}

.curve {
  fill: none;
  stroke: #000;
  stroke-width: 1.3;
}

.beam {
  fill: none;
  stroke: #2a1214;
  stroke-width: 3;
  shape-rendering: crispEdges;
}

.tag {
  font: 53px "Liberation Sans", sans-serif;
  stroke: #000;
  stroke-width: 2;
}

.room {
  font: 57px "Noto Sans CJK KR", sans-serif;
  stroke-width: 0;
}

.sel {
  shape-rendering: crispEdges;
}

.dim-line {
  fill: none;
  stroke: #7a9cf0;
}

.grip {
  fill: #5e96e8;
  stroke: #3a5f9a;
}

.flip {
  fill: none;
  stroke: #1247b8;
  shape-rendering: crispEdges;
}

.flip-arrows {
  stroke: #3f70dc;
  shape-rendering: auto;
}

.dim-text {
  font: 12px "Liberation Sans", sans-serif;
  fill: #1247b8;
  text-anchor: middle;
}

.accel {
  position: absolute;
  top: 19px;
  right: 36px;
  display: flex;
  gap: 4px;
  width: 121px;
  color: #777;
  line-height: 14px;
  white-space: nowrap;
}

.accel input {
  appearance: none;
  flex: none;
  width: 36px;
  height: 18px;
  margin-top: 7px;
  border-radius: 9px;
  background: radial-gradient(circle at 10px 9px, #fff 6px, #9c9c9c 7px);
}

.navbar {
  position: absolute;
  top: 3px;
  right: 0;
  display: flex;
  flex-direction: column;
  align-items: center;
  width: 35px;
  height: 117px;
  padding: 1px 2px;
  border: 1px solid #b8b8b8;
  border-radius: 5px;
  background: #f3f3f3;
}

.navbar .end {
  align-self: flex-end;
  margin-bottom: 10px;
}

.navbar .last {
  margin: auto 0 2px;
}

.navbar .tri {
  margin-top: 6px;
  border-top-color: #999;
}

.navbar hr {
  width: 26px;
  margin: 5px 0 8px;
  border: 0;
  border-top: 1px solid #c4c4c4;
}

.vscroll {
  display: flex;
  flex-direction: column;
  align-items: center;
  justify-content: space-between;
  width: 19px;
  padding: 7px 1px 5px 0;
  background: #e8e8e8;
  border-right: 2px solid #f5f5f5;
}

.thumb-v {
  width: 9px;
  height: 17px;
  border-radius: 3px;
  background: #8c8c8c;
}

.viewbar {
  display: flex;
  height: 18px;
  border-bottom: 1px solid #fff;
  background: #e8e8e8;
}

.view-tools {
  display: flex;
  align-items: center;
  width: 424px;
  padding-left: 33px;
  background: #f5f5f5;
}

.scale {
  width: 60px;
  font-size: 12px;
}

.view-tools button {
  display: grid;
  place-items: center;
  width: 30px;
}

.hscroll {
  display: flex;
  align-items: center;
  justify-content: space-between;
  flex: 1;
  padding: 0 6px 0 5px;
}

.thumb-h {
  width: 17px;
  height: 9px;
  border-radius: 3px;
  background: #8c8c8c;
}

.corner {
  align-self: flex-end;
  margin: 4px 5px;
}

/* project browser */
.browser {
  width: 332px;
  padding-left: 2px;
  border-left: 2px solid var(--line);
  background: #fff;
}

.browser header {
  height: 17px;
  padding: 0;
  margin-left: -2px;
  padding-left: 3px;
}

.browser header button {
  margin-right: -6px;
}

.browser-tabs {
  display: flex;
  height: 24px;
  background: #cbcbcb;
}

.browser-tabs button {
  display: grid;
  place-items: center;
  width: 24px;
}

.browser-tabs .active {
  background: #fff;
}

.search {
  display: flex;
  align-items: center;
  gap: 9px;
  height: 26px;
  margin: 8px 3px 7px 8px;
  padding-left: 8px;
  border: 1px solid #dcdcdc;
}

.search input {
  flex: 1;
}

.search input::placeholder {
  color: #a8a8a8;
}

.tree {
  margin: 0;
  padding: 0;
  list-style: none;
  color: #000;
}

.tree li {
  position: relative;
  display: flex;
  align-items: center;
  gap: 4px;
  height: 20px;
  padding-left: 4px;
  border: 1px solid transparent;
}

.tree a {
  color: inherit;
  text-decoration: none;
}

.exp {
  width: 13px;
  color: #777;
  font: 700 16px/16px "Liberation Sans", sans-serif;
}

.tree .lv1 {
  padding-left: 20px;
}

.tree .lv2 {
  padding-left: 36px;
}

.tree .bold {
  font-weight: 700;
  font-size: 12px;
}

.tree .hot {
  border-color: #dcdcdc;
  border-right: 0;
  background: #f2f2f2;
}

/* dashed connectors */
.trunk::before {
  content: "";
  position: absolute;
  top: 0;
  bottom: -2px;
  left: 7px;
  border-left: 1px dashed #b8b8b8;
}

.trunk.lv1::before {
  width: 9px;
  bottom: 9px;
  border-bottom: 1px dashed #b8b8b8;
}

.trunk.lv1:not(.trunkEnd) {
  background: linear-gradient(#b8b8b8 60%, transparent 0) 7px 10px / 1px 5px repeat-y;
}

.lv2::after {
  content: "";
  position: absolute;
  top: -2px;
  left: 23px;
  width: 25px;
  height: 12px;
  border-left: 1px dashed #b8b8b8;
  border-bottom: 1px dashed #b8b8b8;
}

.lv2:not(.last) {
  background-image: linear-gradient(#b8b8b8 60%, transparent 0);
  background-position: 23px 0;
  background-size: 1px 5px;
  background-repeat: repeat-y;
}

/* status bar */
.status {
  display: flex;
  align-items: center;
  height: 22px;
  padding: 2px 64px 0 2px;
  color: #444;
  background: #f5f5f5;
  white-space: nowrap;
}

.hint {
  width: 945px;
}

.workset {
  display: flex;
  align-items: center;
  width: 239px;
}

.push {
  margin-left: auto;
  margin-right: 13px;
}

.requests {
  display: flex;
  gap: 3px;
  width: 51px;
  color: #999;
}

.options-set {
  display: flex;
  align-items: center;
  gap: 11px;
  width: 266px;
  color: #999;
}

.filters {
  display: flex;
  align-items: center;
  gap: 11px;
  margin-left: auto;
}

.filters span {
  margin-left: -9px;
}

.watermark {
  position: absolute;
  right: 74px;
  bottom: 46px;
  color: #b4b4b4;
  font-size: 16px;
  line-height: 22px;
  white-space: nowrap;
  opacity: 0.9;
}

.watermark b {
  display: block;
  font-size: 21px;
  font-weight: 400;
  line-height: 24px;
}
</style>
